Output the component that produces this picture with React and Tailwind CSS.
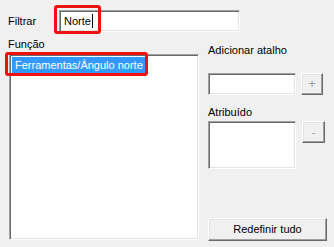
export default function App() {
  const sunken =
    "bg-white border border-t-[#a0a0a0] border-l-[#a0a0a0] border-b-white border-r-white shadow-[inset_1px_1px_0_#696969,inset_-1px_-1px_0_#e3e3e3]";
  const raised =
    "bg-[#f0f0f0] border border-t-white border-l-white border-b-[#696969] border-r-[#696969] shadow-[inset_-1px_-1px_0_#a0a0a0,inset_1px_1px_0_#e3e3e3]";

  return (
    <div
      className="relative w-[334px] h-[247px] bg-[#f0f0f0] text-[11px] text-black overflow-hidden"
      style={{ fontFamily: '"Liberation Sans", Arial, sans-serif' }}
    >
      {/* Filtro */}
      <div className="flex items-center pt-[10px] pl-[8px]">
        <span className="w-[51px]">Filtrar</span>
        <div className={`w-[181px] h-[22px] flex items-center pl-[4px] ${sunken}`}>
          <span>Norte</span>
          <span className="w-px h-[14px] bg-black ml-px" />
        </div>
      </div>

      <div className="flex pl-[8px] mt-[4px]">
        {/* Lista de funções */}
        <div className="flex flex-col">
          <span className="h-[16px] leading-[16px]">Função</span>
          <div className={`w-[190px] h-[186px] ml-px mt-[2px] p-[2px] ${sunken}`}>
            <div className="w-[135px] h-[16px] leading-[16px] bg-[#3399ff] text-white pl-[3px] whitespace-nowrap">
              Ferramentas/Ângulo norte
            </div>
          </div>
        </div>

        {/* Coluna direita */}
        <div className="flex flex-col ml-[9px] pt-[6px]">
          <span className="h-[16px] leading-[16px]">Adicionar atalho</span>
          <div className="flex gap-[5px] mt-[15px]">
            <div className={`w-[88px] h-[22px] ${sunken}`} />
            <div className={`w-[22px] h-[22px] flex items-center justify-center text-[#a0a0a0] text-[13px] ${raised}`}>
              +
            </div>
          </div>
          <span className="h-[16px] leading-[16px] mt-[9px]">Atribuído</span>
          <div className="flex gap-[6px] mt-[1px]">
            <div className={`w-[88px] h-[48px] ${sunken}`} />
            <div className={`w-[23px] h-[22px] flex items-center justify-center text-[#a0a0a0] ${raised}`}>
              -
            </div>
          </div>
          <div className={`w-[119px] h-[23px] mt-[49px] flex items-center justify-center ${raised}`}>
            Redefinir tudo
          </div>
        </div>
      </div>

      {/* Destaques */}
      <div className="absolute left-[54px] top-[5px] w-[47px] h-[29px] border-[3px] border-[#ee1111] rounded-[3px]" />
      <div className="absolute left-[5px] top-[52px] w-[143px] h-[24px] border-[3px] border-[#ee1111] rounded-[3px]" />
    </div>
  );
}
